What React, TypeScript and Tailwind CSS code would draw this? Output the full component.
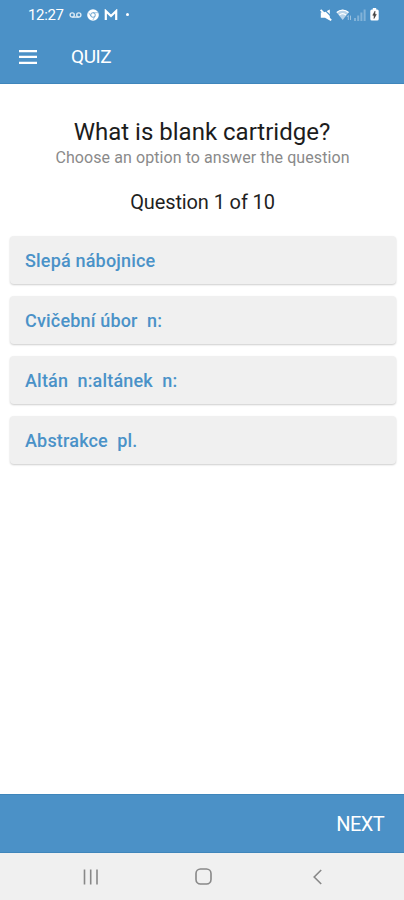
import { useState } from 'react';

const options = [
  'Slepá nábojnice',
  'Cvičební úbor  n:',
  'Altán  n:altánek  n:',
  'Abstrakce  pl.'
];

const StatusBar = () => (
  <div className="flex h-[29px] items-center justify-between pr-[25px] pl-[28px]">
    <div className="flex items-center">
      <span className="w-[36px] pt-px font-['Roboto',sans-serif] text-[15px] leading-none font-normal tracking-[-0.35px] whitespace-nowrap">12:27</span>
      <svg className="ml-[5px]" width="13" height="8" viewBox="0 0 13 8" fill="none" stroke="currentColor" strokeWidth="1.4" opacity="0.8">
        <circle cx="3.2" cy="4" r="2.1" />
        <circle cx="9.8" cy="4" r="2.1" />
        <path d="M3.2 6.1h6.6" />
      </svg>
      <svg className="ml-[5px]" width="12" height="12" viewBox="0 0 12 12">
        <circle cx="6" cy="6" r="5.8" fill="currentColor" />
        <circle cx="6" cy="6" r="2.3" fill="none" stroke="#4b91c7" strokeWidth="0.8" />
        <path d="M6 3.7h5M3.9 7.2 1.7 3.6M8.1 7.2 5.8 11" stroke="#4b91c7" strokeWidth="0.5" />
      </svg>
      <svg className="ml-[5px]" width="14" height="11" viewBox="0 0 14 11" fill="none" stroke="currentColor" strokeWidth="2.2">
        <path d="M1.8 11V2L7 7l5.2-5v9" />
      </svg>
      <span className="ml-[8px] h-[3px] w-[3px] rounded-full bg-white" />
    </div>
    <div className="flex items-center">
      <svg width="12" height="12" viewBox="0 0 12 12">
        <path d="M.8 3.2h3.6L9.8.6v10.8L5 8.8H.8z" fill="currentColor" />
        <path d="M4.4.6 11.6 7.8" stroke="#4b91c7" strokeWidth="1.2" />
        <path d="M.6.8l10.6 10.6" stroke="currentColor" strokeWidth="1.8" />
      </svg>
      <svg className="ml-[4px]" width="16" height="12" viewBox="0 0 16 12">
        <path d="M.5 3.3C4-.1 9.3-.1 12.8 3.3L6.7 11z" fill="currentColor" opacity="0.6" />
        <path d="M.8 3.5C4.2.3 9.1.3 12.5 3.5M3.4 6c2-1.8 4.5-1.8 6.5 0" fill="none" stroke="currentColor" strokeWidth="1.2" />
        <path d="M12.3 11V6.6m-1.2 1.2 1.2-1.3M14.5 6.6V11" fill="none" stroke="currentColor" strokeWidth="0.9" opacity="0.5" />
      </svg>
      <svg className="ml-[2px]" width="12" height="12" viewBox="0 0 12 12" fill="currentColor" opacity="0.3">
        <path d="M0 9h2v3H0zM3.2 6.5h2V12h-2zM6.4 3.5h2V12h-2zM9.6.5h2V12h-2z" />
      </svg>
      <svg className="ml-[4px]" width="9" height="13" viewBox="0 0 9 13">
        <path d="M2.8 0h3.4v1.4h1Q8.7 1.4 8.7 3v8q0 1.6-1.6 1.6H1.9Q.3 12.6.3 11V3q0-1.6 1.6-1.6h.9z" fill="currentColor" />
        <path d="M5 3.2 2.8 7.3h1.4L4 10.5l2.3-4.1H4.9z" fill="#3d3d3d" stroke="#3d3d3d" strokeWidth="0.6" />
      </svg>
    </div>
  </div>
);

const App = () => {
  const [selected, setSelected] = useState<number | null>(null);

  return (
    <div className="flex h-[900px] w-[404px] flex-col bg-white font-['Roboto',sans-serif]">
      <header className="h-[84px] border-b border-[#3f86bb] bg-[#4b91c7] text-white">
        <StatusBar />
        <div className="flex h-[55px] items-center pl-[19px]">
          <button type="button" aria-label="Menu">
            <svg width="18" height="14" viewBox="0 0 18 14" fill="currentColor">
              <path d="M0 0h18v2.3H0zM0 5.8h18v2.3H0zM0 11.7h18V14H0z" />
            </svg>
          </button>
          <h1 className="ml-[34px] text-[19px] leading-none tracking-[-0.4px]">QUIZ</h1>
        </div>
      </header>

      <main className="flex flex-1 flex-col">
        <div className="pt-[34px] text-center">
          <h2 className="text-2xl leading-[28px] text-[#1c1c1c]">What is blank cartridge?</h2>
          <p className="pt-px pl-px text-base leading-[22px] tracking-[0.08px] text-[#8a8a8a]">Choose an option to answer the question</p>
          <p className="mt-[21px] pl-px text-xl leading-[24px] tracking-[-0.12px] text-[#1f1f1f]">Question 1 of 10</p>
        </div>

        <div className="mt-[22px] flex flex-col gap-[12px] pr-[8px] pl-[10px]">
          {options.map((option, index) => (
            <button
              key={option}
              type="button"
              aria-pressed={selected === index}
              onClick={() => setSelected(index)}
              className="h-[48px] rounded-[4px] bg-[#f0f0f0] px-[15px] pt-[2px] text-left text-lg font-medium tracking-[0.18px] whitespace-pre text-[#4a92c8] shadow-[0_1px_2px_rgba(0,0,0,0.2)]"
            >
              {option}
            </button>
          ))}
        </div>
      </main>

      <footer>
        <div className="flex h-[59px] items-center justify-end border-y border-[#3f86bb] bg-[#4b91c7] pr-[20px]">
          <button type="button" className="pt-px text-xl leading-none tracking-[-0.6px] text-white">NEXT</button>
        </div>
        <nav className="flex h-[47px] items-center bg-[#f0f0f0] pl-[83px] text-[#888888]">
          <svg width="16" height="16" viewBox="0 0 16 16" stroke="currentColor" strokeWidth="1.6">
            <path d="M1.5 0.5v15M7.7 0.5v15M14 0.5v15" />
          </svg>
          <svg className="ml-[96px]" width="17" height="17" viewBox="0 0 17 17" fill="none" stroke="currentColor" strokeWidth="1.6">
            <rect x="1" y="1" width="15" height="15" rx="4.5" />
          </svg>
          <svg className="ml-[101px]" width="9" height="16" viewBox="0 0 9 16" fill="none" stroke="currentColor" strokeWidth="1.6">
            <path d="M8.2 1 1.2 8l7 7" />
          </svg>
        </nav>
      </footer>
    </div>
  );
};

export default App;
